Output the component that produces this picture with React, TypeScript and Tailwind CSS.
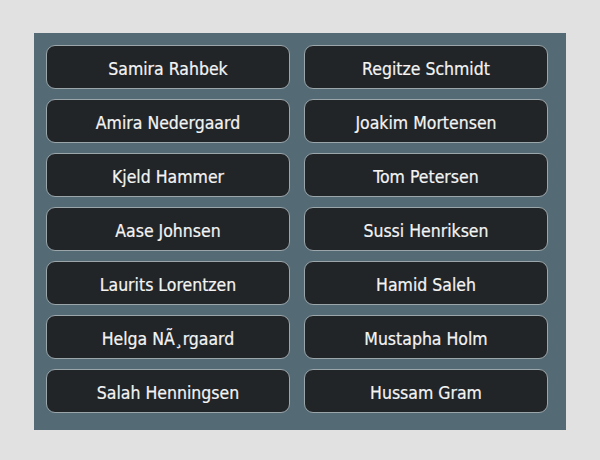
const names: [string, string][] = [
  ['Samira Rahbek', 'Regitze Schmidt'],
  ['Amira Nedergaard', 'Joakim Mortensen'],
  ['Kjeld Hammer', 'Tom Petersen'],
  ['Aase Johnsen', 'Sussi Henriksen'],
  ['Laurits Lorentzen', 'Hamid Saleh'],
  ['Helga NÃ¸rgaard', 'Mustapha Holm'],
  ['Salah Henningsen', 'Hussam Gram'],
]

export default function App() {
  return (
    <div className="w-[600px] h-[460px] bg-[#e1e1e1] pt-[33px] pl-[34px] font-['DejaVu_Sans_Condensed',sans-serif]">
      <div className="w-[532px] bg-[#546a74] pt-3 pl-3 pr-[18px] pb-[17px]">
        <div className="grid grid-cols-2 gap-x-[14px] gap-y-[10px]">
          {names.flat().map((name) => (
            <button
              key={name}
              type="button"
              className="h-[44px] rounded-[9px] border border-[#9ba6ab] bg-[#222528] pt-1 text-[17.5px] text-[#f4f4f4] [-webkit-text-stroke:0.2px_#f4f4f4]"
            >
              {name}
            </button>
          ))}
        </div>
      </div>
    </div>
  )
}
